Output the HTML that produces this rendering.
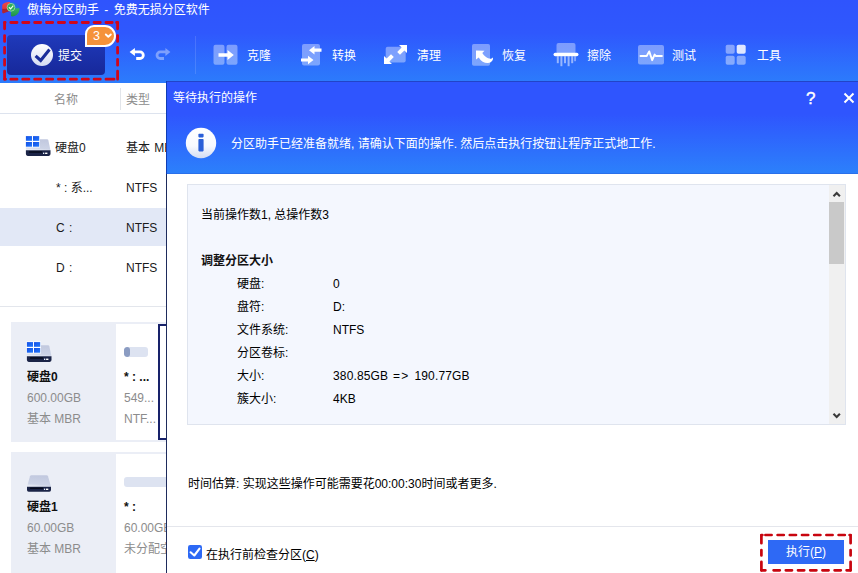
<!DOCTYPE html>
<html lang="zh-CN">
<head>
<meta charset="utf-8">
<title>傲梅分区助手</title>
<style>
*{box-sizing:border-box;margin:0;padding:0}
html,body{width:858px;height:573px;overflow:hidden;background:#fff}
body{position:relative;font-family:"Liberation Sans","Noto Sans CJK SC",sans-serif;font-size:12px;color:#1a1a1a}
.abs{position:absolute}
.t{position:absolute;white-space:nowrap;line-height:16px;height:16px}
/* header */
#hdr{left:0;top:0;width:858px;height:83px;background:linear-gradient(180deg,#2f54fd 0%,#2f58fd 40%,#2c7cfc 100%)}
#title{left:27px;top:2px;color:#fff;font-size:12px;word-spacing:2px}
#subwrap{left:3px;top:21px;width:116px;height:60px;border:3px dashed #cc0a14;border-radius:4px}
#sub{left:7px;top:35px;width:98px;height:40px;border-radius:4px;background:linear-gradient(180deg,#1f3abb,#17289a)}
#badge{left:85px;top:25px;width:31px;height:22px;background:#f5923a;border:2px solid #fff;border-radius:9px 11px 11px 0}
.tb{color:#fff;font-size:12px}
/* left */
.gray{color:#8c8c8c}
.hline{position:absolute;height:1px;background:#dde3ee}
/* dialog */
#dlg{left:166px;top:81px;width:692px;height:492px;background:#fff;border-left:1px solid #1e2b5c}
#dhead{left:0;top:0;width:691px;height:93px;background:linear-gradient(180deg,#2f55fe 0%,#2f55fe 35%,#2c80fb 100%);border-top:1px solid #2244c8;border-bottom:1px solid #2a70ea;box-shadow:-1px 0 0 #0e3db6}
#box{left:187px;top:184px;width:659px;height:241px;background:#f4f7fe;border:1px solid #dfe4ee}
.row{position:absolute;white-space:nowrap;line-height:16px;height:16px;font-size:12px;color:#000}
</style>
</head>
<body>
<!-- ===== header ===== -->
<div id="hdr" class="abs"></div>
<svg class="abs" style="left:0;top:0" width="24" height="20" viewBox="0 0 24 20">
  <defs><linearGradient id="rg" x1="0" y1="0" x2="0" y2="1"><stop offset="0" stop-color="#f04848"/><stop offset=".55" stop-color="#e03a3c"/><stop offset=".6" stop-color="#a82430"/><stop offset="1" stop-color="#b8242e"/></linearGradient>
  <linearGradient id="gg" x1="0" y1="0" x2="0" y2="1"><stop offset="0" stop-color="#36b765"/><stop offset="1" stop-color="#1f8f4a"/></linearGradient></defs>
  <path d="M10 2.100C15.500 1.900 19.700 5 19.600 9.300L14.800 9C14.600 7 13 5.600 10.200 5.400z" fill="#1f6fe0"/>
  <path d="M2.200 5.600C2.600 3.400 5.800 2.200 9.900 2.100L10.400 7.200V10.800L3 13.600C2.300 13.200 2.100 12 2.200 10.600z" fill="url(#rg)"/>
  <path d="M10.900 8.600L19.500 8.300C19.600 13 16.500 16.400 12 16.400L11 16z" fill="url(#gg)"/>
  <circle cx="11" cy="7.300" r="3.900" fill="#2fae57" stroke="#9fe0a8" stroke-width=".8"/>
  <path d="M8.900 7.200l1.700 1.600 2.700-3.100" stroke="#eaffea" stroke-width="1.200" fill="none"/>
</svg>
<div id="title" class="t">傲梅分区助手 - 免费无损分区软件</div>

<svg class="abs" style="left:0;top:18px" width="124" height="65" viewBox="0 18 124 65" fill="none" stroke="#d0061a" stroke-width="2.8" stroke-linecap="round">
  <path d="M10.800 22.500h6.200M22.700 22.500h6.200M34.600 22.500h6.200M46.500 22.500h6.200M58.400 22.500h6.200M70.300 22.500h6.200M82.200 22.500h6.200M94.100 22.500h6.200M106 22.500h6.200"/>
  <path d="M10.800 79.200h6.200M22.700 79.200h6.200M34.600 79.200h6.200M46.500 79.200h6.200M58.400 79.200h6.200M70.300 79.200h6.200M82.200 79.200h6.200M94.100 79.200h6.200M106 79.200h8"/>
  <path d="M4.600 22.600v6.200M4.600 35.600v5.800M4.600 47.400v5.800M4.600 59.400v5.800M4.600 71.200v8"/>
  <path d="M117.600 22.600v6.200M117.600 35.600v5.800M117.600 47.400v5.800M117.600 59.400v5.800M117.600 71.200v8"/>
  <path d="M4.600 79.200h1M116.600 22.500h1M4.600 22.500h0.500"/>
</svg>
<div id="sub" class="abs"></div>
<svg class="abs" style="left:30px;top:43px" width="24" height="24" viewBox="0 0 24 24">
  <defs><linearGradient id="cg" x1="0" y1="0" x2="0" y2="1"><stop offset="0" stop-color="#ffffff"/><stop offset="1" stop-color="#d4dbf3"/></linearGradient></defs>
  <circle cx="12" cy="12" r="11" fill="url(#cg)"/>
  <path d="M5.600 12.800l5.100 4.700 8.800-11" stroke="#1a2d9a" stroke-width="3.100" fill="none"/>
</svg>
<div class="t tb" style="left:58px;top:48px;font-size:12px">提交</div>
<div id="badge" class="abs"></div>
<div class="t" style="left:93px;top:28px;color:#fff;font-size:12.500px">3</div>
<svg class="abs" style="left:103px;top:31px" width="10" height="10" viewBox="0 0 10 10"><path d="M2.800 3.500l2.500 2.300 2.500-2.300" stroke="#fff" stroke-width="1.900" fill="none" stroke-linecap="round" stroke-linejoin="round"/></svg>

<!-- undo / redo -->
<svg class="abs" style="left:128px;top:46px" width="18" height="16" viewBox="0 0 18 16">
  <path d="M1.600 5.900L6.900 1.900V4.500H12A4.700 4.700 0 0 1 12 13.900H8.200V11.100H12A1.900 1.900 0 0 0 12 7.300H6.900V9.900Z" fill="#fff"/>
</svg>
<svg class="abs" style="left:154px;top:46px;opacity:.38" width="18" height="16" viewBox="0 0 18 16">
  <path d="M16.400 5.900L11.400 1.900V4.500H6.300A4.700 4.700 0 0 0 6.300 13.900H10V11.100H6.300A1.900 1.900 0 0 1 6.300 7.300H11.400V9.900Z" fill="#fff"/>
</svg>
<div class="abs" style="left:195px;top:36px;width:1px;height:38px;background:rgba(255,255,255,.13)"></div>

<!-- toolbar icons -->
<!-- clone -->
<svg class="abs" style="left:213px;top:44px" width="26" height="22" viewBox="0 0 26 22">
  <rect x="0.5" y="0.7" width="11" height="20" rx="2" fill="#fff" fill-opacity=".38"/>
  <rect x="13.5" y="0.7" width="11" height="20" rx="2" fill="#fff" fill-opacity=".38"/>
  <path d="M5.5 9.2h9V6l6.3 5-6.3 5v-3.2h-9z" fill="#fff"/>
</svg>
<div class="t tb" style="left:247px;top:48px">克隆</div>
<!-- convert -->
<svg class="abs" style="left:300px;top:43px" width="24" height="24" viewBox="0 0 24 24">
  <rect x="2" y="1" width="18" height="21.5" rx="2" fill="#fff" fill-opacity=".38"/>
  <path d="M21.5 5.6h-7V3L9 7.2l5.5 4.2V8.8h7z" fill="#fff"/>
  <path d="M1 15.4h7v-2.6l5.5 4.2L8 21.2v-2.6H1z" fill="#fff"/>
</svg>
<div class="t tb" style="left:332px;top:48px">转换</div>
<!-- clean -->
<svg class="abs" style="left:383px;top:43px" width="26" height="24" viewBox="0 0 26 24">
  <rect x="2.7" y="3.8" width="20" height="15.8" rx="2" fill="#fff" fill-opacity=".38"/>
  <path d="M24 2v8l-2.6-2.6-4.4 4.4-2.8-2.8 4.4-4.4L16 2z" fill="#fff"/>
  <path d="M1 21v-8l2.600 2.600 4.400-4.400 2.800 2.800-4.400 4.400L9 21z" fill="#fff"/>
</svg>
<div class="t tb" style="left:417px;top:48px">清理</div>
<!-- restore -->
<svg class="abs" style="left:470px;top:43px" width="26" height="24" viewBox="0 0 26 24">
  <rect x="2" y="0.900" width="18" height="21.900" rx="1.800" fill="#fff" fill-opacity=".38"/>
  <path d="M6 7.600L14.500 7.800L12.300 10.100C14 13 16.500 15 19 15.600C21 16 22.400 15.400 22.900 14.200C23.600 17 21.500 19.700 18 20C14.500 20.200 11 18.200 8.700 14.400L6 16.400Z" fill="#fff"/>
</svg>
<div class="t tb" style="left:502px;top:48px">恢复</div>
<!-- wipe -->
<svg class="abs" style="left:553px;top:42px" width="26" height="26" viewBox="0 0 26 26">
  <rect x="3.500" y="1" width="19" height="11" rx="2" fill="#fff" fill-opacity=".38"/>
  <rect x="0.500" y="10.800" width="25" height="3.400" rx="1.700" fill="#fff"/>
  <g fill="#fff" fill-opacity=".5">
    <rect x="3.800" y="14.200" width="2" height="7"/>
    <rect x="7.400" y="14.200" width="2" height="10"/>
    <rect x="11" y="14.200" width="2" height="7"/>
    <rect x="14.600" y="14.200" width="2" height="10"/>
    <rect x="18.200" y="14.200" width="2" height="7"/>
    <rect x="21.300" y="14.200" width="1.500" height="5"/>
  </g>
</svg>
<div class="t tb" style="left:587px;top:48px">擦除</div>
<!-- test -->
<svg class="abs" style="left:637px;top:44px" width="28" height="22" viewBox="0 0 28 22">
  <rect x="1" y="1" width="26" height="19.600" rx="2" fill="#fff" fill-opacity=".38"/>
  <path d="M3.500 12h6.200l2.500-4.600 3 8.800 2.400-5.600 1.300 1.400h6" stroke="#fff" stroke-width="1.900" fill="none" stroke-linejoin="round" stroke-linecap="round"/>
</svg>
<div class="t tb" style="left:672px;top:48px">测试</div>
<!-- tools -->
<svg class="abs" style="left:725px;top:44px" width="22" height="22" viewBox="0 0 22 22">
  <rect x="0.700" y="0.700" width="9" height="9" rx="1.800" fill="#fff" fill-opacity=".42"/>
  <rect x="11.700" y="0.700" width="9" height="9" rx="1.800" fill="#fff" fill-opacity=".85"/>
  <rect x="0.700" y="11.700" width="9" height="9" rx="1.800" fill="#fff" fill-opacity=".42"/>
  <rect x="11.700" y="11.700" width="9" height="9" rx="1.800" fill="#fff" fill-opacity=".42"/>
</svg>
<div class="t tb" style="left:757px;top:48px">工具</div>

<!-- ===== left panel ===== -->
<svg class="abs" width="0" height="0" style="left:0;top:0"><defs>
  <linearGradient id="dg" x1="0.200" y1="0" x2="0" y2="1"><stop offset="0" stop-color="#c2c9df"/><stop offset=".7" stop-color="#ccd3e6"/><stop offset="1" stop-color="#f4f6fb"/></linearGradient>
  <linearGradient id="wg" x1="0" y1="0" x2="1" y2="1"><stop offset="0" stop-color="#1450e6"/><stop offset="1" stop-color="#2277fb"/></linearGradient>
</defs></svg>

<div class="t gray" style="left:54px;top:92px">名称</div>
<div class="abs" style="left:120px;top:88px;width:1px;height:22px;background:#e2e5ea"></div>
<div class="t gray" style="left:126px;top:92px">类型</div>
<div class="hline" style="left:0;top:113px;width:166px"></div>

<div class="abs" style="left:0;top:208px;width:166px;height:38px;background:#e2e8f6"></div>

<!-- disk icon (win) -->
<svg class="abs" style="left:25px;top:135px" width="27" height="22" viewBox="0 0 27 22">
  <path d="M14 4.200h8.200q.800 0 1.100.800L25.500 15.400H0.900V11z" fill="url(#dg)"/>
  <path d="M0.900 15.300h24.600v3.800q0 1.800-1.800 1.800H2.700q-1.800 0-1.800-1.800z" fill="#1b2447"/>
  <rect x="3.800" y="16.300" width="13.500" height="1.500" rx=".7" fill="#060a1c"/>
  <rect x="18" y="17.600" width="1.300" height="1.400" fill="#e8f0ff"/><rect x="20.100" y="17.600" width="2.300" height="1.400" fill="#fff"/>
  <rect x="0.300" y="0.500" width="14.600" height="12" fill="#fff"/>
  <rect x="0.900" y="1.100" width="6.100" height="4.700" fill="url(#wg)"/><rect x="8" y="1.100" width="6.200" height="4.700" fill="url(#wg)"/>
  <rect x="0.900" y="7" width="6.100" height="4.700" fill="url(#wg)"/><rect x="8" y="7" width="6.200" height="4.700" fill="url(#wg)"/>
</svg>
<div class="t" style="left:55px;top:140px">硬盘0</div>
<div class="t" style="left:126px;top:140px;word-spacing:1px">基本 MBR</div>
<div class="t" style="left:56px;top:180px">* : 系...</div>
<div class="t" style="left:126px;top:180px">NTFS</div>
<div class="t" style="left:56px;top:220px;word-spacing:1px">C :</div>
<div class="t" style="left:126px;top:220px">NTFS</div>
<div class="t" style="left:56px;top:260px;word-spacing:1px">D :</div>
<div class="t" style="left:126px;top:260px">NTFS</div>
<div class="hline" style="left:0;top:306px;width:166px;background:#e3e6ec"></div>

<!-- disk 0 card -->
<div class="abs" style="left:11px;top:322px;width:156px;height:120px;background:#ebeef6"></div>
<div class="abs" style="left:116px;top:324px;width:42px;height:116px;background:#fff"></div>
<div class="abs" style="left:158px;top:324px;width:20px;height:116px;background:#fff;border:2px solid #18226a"></div>
<svg class="abs" style="left:26px;top:341px" width="27" height="22" viewBox="0 0 27 22">
  <path d="M14 4.200h8.200q.800 0 1.100.800L25.500 15.400H0.900V11z" fill="url(#dg)"/>
  <path d="M0.900 15.300h24.600v3.800q0 1.800-1.800 1.800H2.700q-1.800 0-1.800-1.800z" fill="#1b2447"/>
  <rect x="3.800" y="16.300" width="13.500" height="1.500" rx=".7" fill="#060a1c"/>
  <rect x="18" y="17.600" width="1.300" height="1.400" fill="#e8f0ff"/><rect x="20.100" y="17.600" width="2.300" height="1.400" fill="#fff"/>
  <rect x="0.300" y="0.500" width="14.600" height="12" fill="#fff"/>
  <rect x="0.900" y="1.100" width="6.100" height="4.700" fill="url(#wg)"/><rect x="8" y="1.100" width="6.200" height="4.700" fill="url(#wg)"/>
  <rect x="0.900" y="7" width="6.100" height="4.700" fill="url(#wg)"/><rect x="8" y="7" width="6.200" height="4.700" fill="url(#wg)"/>
</svg>
<div class="t" style="left:27px;top:369px;font-weight:bold;color:#111">硬盘0</div>
<div class="t gray" style="left:27px;top:390px">600.00GB</div>
<div class="t gray" style="left:27px;top:411px">基本 MBR</div>
<div class="abs" style="left:124px;top:347px;width:24px;height:10px;border-radius:3px;background:#dde3f1;overflow:hidden"><div style="width:6px;height:10px;background:#8b9cc2;border-radius:3px"></div></div>
<div class="t" style="left:124px;top:369px;font-weight:bold;color:#111">* : ...</div>
<div class="t gray" style="left:124px;top:390px">549...</div>
<div class="t gray" style="left:124px;top:411px">NTF...</div>

<!-- disk 1 card -->
<div class="abs" style="left:11px;top:452px;width:156px;height:121px;background:#ebeef6"></div>
<div class="abs" style="left:116px;top:454px;width:51px;height:119px;background:#fff"></div>
<svg class="abs" style="left:26px;top:474px" width="27" height="19" viewBox="0 0 27 19">
  <path d="M5.300 1.300h15.400q1 0 1.300.900L25 12.800H1L4 2.200q.300-.900 1.300-.900z" fill="url(#dg)"/>
  <path d="M1 12.700h24v3.400q0 1.700-1.700 1.700H2.700Q1 17.800 1 16.100z" fill="#1b2447"/>
  <rect x="3.800" y="13.500" width="13.500" height="1.500" rx=".7" fill="#060a1c"/>
  <rect x="17.900" y="14.600" width="1.300" height="1.400" fill="#e8f0ff"/><rect x="20" y="14.600" width="2.300" height="1.400" fill="#fff"/>
</svg>
<div class="t" style="left:27px;top:499px;font-weight:bold;color:#111">硬盘1</div>
<div class="t gray" style="left:27px;top:520px">60.00GB</div>
<div class="t gray" style="left:27px;top:541px">基本 MBR</div>
<div class="abs" style="left:124px;top:477px;width:50px;height:10px;border-radius:3px;background:#dde3f1"></div>
<div class="t" style="left:124px;top:499px;font-weight:bold;color:#111">* :</div>
<div class="t gray" style="left:124px;top:520px">60.00GB</div>
<div class="t gray" style="left:124px;top:541px">未分配空间</div>

<!-- ===== dialog ===== -->
<div id="dlg" class="abs">
  <div id="dhead" class="abs"></div>
</div>
<div class="t" style="left:173px;top:90px;color:#fff">等待执行的操作</div>
<div class="t" style="left:806px;top:91px;color:#fff;font-size:17px;-webkit-text-stroke:.4px #fff">?</div>
<svg class="abs" style="left:843px;top:92px" width="12" height="12" viewBox="0 0 12 12"><path d="M1.500 1.500l9 9M10.500 1.500l-9 9" stroke="#fff" stroke-width="2" fill="none"/></svg>

<svg class="abs" style="left:185px;top:127px" width="32" height="32" viewBox="0 0 32 32">
  <defs><linearGradient id="ig" x1="0" y1="0" x2="0" y2="1"><stop offset="0" stop-color="#ffffff"/><stop offset=".6" stop-color="#f7f9ff"/><stop offset="1" stop-color="#d3dcf2"/></linearGradient></defs>
  <circle cx="16" cy="16" r="15.200" fill="url(#ig)"/>
  <rect x="13.400" y="6.800" width="5.200" height="3.600" rx=".8" fill="#2a5fd8"/>
  <rect x="13.400" y="12" width="5.200" height="12.400" rx=".8" fill="#2a5fd8"/>
</svg>
<div class="t" style="left:231px;top:136px;color:#fff">分区助手已经准备就绪, 请确认下面的操作. 然后点击执行按钮让程序正式地工作.</div>

<div id="box" class="abs"></div>
<div class="abs" style="left:829px;top:185px;width:16px;height:239px;background:#f0f0f0"></div>
<div class="abs" style="left:829px;top:202px;width:15px;height:62px;background:#c9c9c9"></div>
<svg class="abs" style="left:831px;top:189px" width="12" height="10" viewBox="0 0 12 10"><path d="M2.500 7.300l3.200-3.200 3.200 3.200" stroke="#3a3a3a" stroke-width="2.100" fill="none"/></svg>
<svg class="abs" style="left:831px;top:411px" width="12" height="10" viewBox="0 0 12 10"><path d="M2.500 2.700l3.200 3.200 3.200-3.200" stroke="#3a3a3a" stroke-width="2.100" fill="none"/></svg>

<div class="row" style="left:201px;top:207px">当前操作数1, 总操作数3</div>
<div class="row" style="left:201px;top:253px;font-weight:bold;color:#111">调整分区大小</div>
<div class="row" style="left:237px;top:276px">硬盘:</div><div class="row" style="left:333px;top:276px">0</div>
<div class="row" style="left:237px;top:299px">盘符:</div><div class="row" style="left:333px;top:299px">D:</div>
<div class="row" style="left:237px;top:322px">文件系统:</div><div class="row" style="left:333px;top:322px">NTFS</div>
<div class="row" style="left:237px;top:345px">分区卷标:</div>
<div class="row" style="left:237px;top:368px">大小:</div><div class="row" style="left:333px;top:368px;letter-spacing:.15px;word-spacing:1.200px">380.85GB <span style="letter-spacing:1.400px">=&gt;</span> 190.77GB</div>
<div class="row" style="left:237px;top:391px">簇大小:</div><div class="row" style="left:333px;top:391px">4KB</div>

<div class="row" style="left:188px;top:476px">时间估算: 实现这些操作可能需要花00:00:30时间或者更多.</div>
<div class="hline" style="left:167px;top:526px;width:691px;background:#e4e6ec"></div>

<svg class="abs" style="left:188px;top:545px" width="14" height="14" viewBox="0 0 14 14">
  <rect x="0" y="0" width="14" height="14" rx="2.200" fill="#2d69f5"/>
  <path d="M2.600 7.300l3.700 3.200 5.200-6.900" stroke="#fff" stroke-width="2.100" fill="none" stroke-linecap="round" stroke-linejoin="round"/>
</svg>
<div class="row" style="left:206px;top:547px">在执行前检查分区(<span style="text-decoration:underline">C</span>)</div>

<svg class="abs" style="left:756px;top:530px" width="102" height="43" viewBox="756 530 102 43" fill="none" stroke="#c8050f" stroke-width="2.700" stroke-linecap="round">
  <path d="M765.400 535h6.200M777.600 535h6.200M789.800 535h6.200M802 535h6.200M814.200 535h6.200M826.400 535h6.200M838.600 535h6.200"/>
  <path d="M773.600 570.300h6.200M785.800 570.300h6.200M798 570.300h6.200M810.200 570.300h6.200M822.400 570.300h6.200M834.600 570.300h6.200"/>
  <path d="M761.400 535.400v7.800M761.400 550v5.400M761.400 561.800v8.500M850.600 535.400v7.800M850.600 550v5.400M850.600 561.800v8.500"/>
  <path d="M761.400 570.300h4M846.600 570.300h4M849.600 535h1M761.400 535h1"/>
</svg>
<div class="abs" style="left:768px;top:540px;width:76px;height:24px;background:#2e69f5"></div>
<div class="row" style="left:768px;top:544px;width:76px;text-align:center;color:#fff">执行(<span style="text-decoration:underline">P</span>)</div>
</body>
</html>
